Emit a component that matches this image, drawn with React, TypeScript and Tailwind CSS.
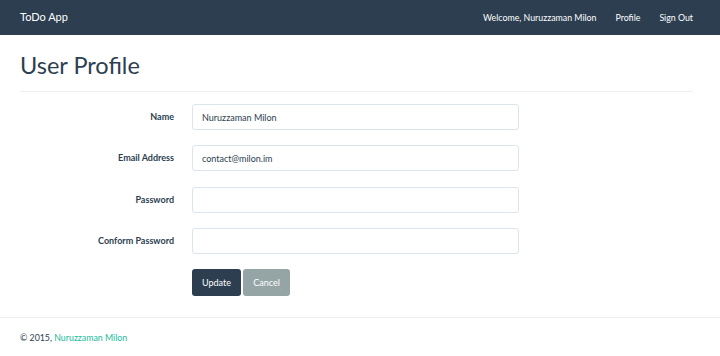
const fields = [
  { label: "Name", type: "text", value: "Nuruzzaman Milon" },
  { label: "Email Address", type: "email", value: "contact@milon.im" },
  { label: "Password", type: "password", value: "" },
  { label: "Conform Password", type: "password", value: "" },
];

export default function App() {
  return (
    <div className="min-h-[356px] bg-white text-[#2c3e50] font-['Lato','Open_Sans',sans-serif]">
      {/* Navbar */}
      <nav className="h-[35px] bg-[#2c3e50] text-white">
        <div className="flex h-full items-center justify-between pl-5 pr-[27px]">
          <a href="#" className="text-[11px]">
            ToDo App
          </a>
          <div className="flex items-center gap-[19px] text-[8.8px]">
            <span>Welcome, Nuruzzaman Milon</span>
            <a href="#">Profile</a>
            <a href="#">Sign Out</a>
          </div>
        </div>
      </nav>

      <main className="pl-5 pr-[27px]">
        <h1 className="pt-[15px] pb-[11px] text-[23.5px] leading-[30px] font-normal border-b border-[#eeeeee]">
          User Profile
        </h1>

        <form className="pt-[12px]">
          {fields.map((f, i) => (
            <div
              key={f.label}
              className={`flex items-center ${i === 1 ? "mb-[16px]" : "mb-[15px]"}`}
            >
              <label className="w-[154px] text-right text-[9px] font-bold">
                {f.label}
              </label>
              <input
                type={f.type}
                defaultValue={f.value}
                className="ml-[18px] h-[26px] w-[327px] rounded-[3px] border border-[#dce4ec] px-[9px] text-[9px] text-[#2c3e50] outline-none"
              />
            </div>
          ))}
          <div className="flex gap-[2px] pl-[172px]">
            <button
              type="button"
              className="h-[27px] w-[49px] rounded-[3px] bg-[#2c3e50] text-[9px] text-white"
            >
              Update
            </button>
            <button
              type="button"
              className="h-[27px] w-[47px] rounded-[3px] bg-[#95a5a6] text-[9px] text-white"
            >
              Cancel
            </button>
          </div>
        </form>
      </main>

      {/* Footer */}
      <footer className="mt-[21px] border-t border-[#eeeeee]">
        <p className="pl-5 pt-[13px] text-[8.8px] leading-[14px]">
          © 2015, <a href="#" className="text-[#18bc9c]">Nuruzzaman Milon</a>
        </p>
      </footer>
    </div>
  );
}
